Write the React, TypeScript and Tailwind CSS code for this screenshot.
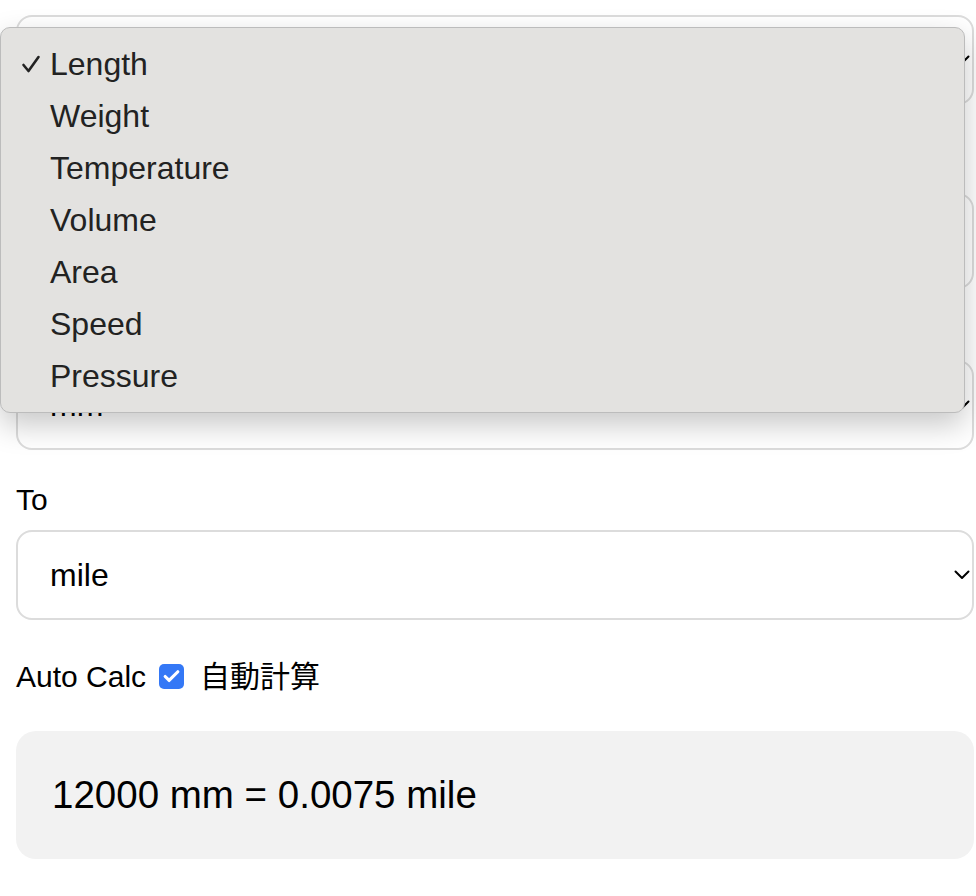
import { Check } from 'lucide-react'

const categories = ['Length', 'Weight', 'Temperature', 'Volume', 'Area', 'Speed', 'Pressure']

function Chevron() {
  return (
    <svg width="16" height="10" viewBox="0 0 16 10" fill="none" className="shrink-0">
      <path d="M1.5 1.5 L8 8 L14.5 1.5" stroke="#000" strokeWidth="2" strokeLinecap="round" strokeLinejoin="round" />
    </svg>
  )
}

function SelectBox({ value, className = '' }: { value: string; className?: string }) {
  return (
    <div
      className={`flex items-center justify-between w-[958px] rounded-[16px] border-2 border-[#dcdcdc] bg-white pl-[32px] pr-[2px] ${className}`}
    >
      <span className="text-[32px] leading-none text-black">{value}</span>
      <Chevron />
    </div>
  )
}

export default function App() {
  return (
    <div
      className="relative w-[976px] h-[896px] overflow-hidden bg-white text-black"
      style={{ fontFamily: '"Liberation Sans", "Noto Sans CJK JP", sans-serif' }}
    >
      <div className="flex flex-col pl-4 pt-[15px]">
        <SelectBox value="Length" className="h-[90px]" />

        <label className="mt-[42px] mb-[10px] text-[30px] leading-[36px]">Value</label>
        <div className="w-[958px] h-[96px] rounded-[16px] border-2 border-[#dcdcdc] bg-white pl-[32px] flex items-center text-[32px]">
          12000
        </div>

        <label className="mt-[20px] mb-[15px] text-[30px] leading-[36px]">From</label>
        <SelectBox value="mm" className="h-[90px]" />

        <label className="mt-[32px] mb-[12px] text-[30px] leading-[36px]">To</label>
        <SelectBox value="mile" className="h-[90px]" />

        <div className="mt-[40px] flex items-center h-[32px] text-[30px]">
          <span>Auto Calc</span>
          <span className="ml-[13px] w-[25px] h-[25px] rounded-[5px] bg-[#3478f6] flex items-center justify-center">
            <Check className="w-[19px] h-[19px] text-white" strokeWidth={4} />
          </span>
          <span className="ml-[16px]">自動計算</span>
        </div>

        <div className="mt-[39px] w-[958px] h-[128px] rounded-[20px] bg-[#f2f2f2] flex items-center pl-[36px]">
          <span className="text-[38.5px]">12000 mm = 0.0075 mile</span>
        </div>
      </div>

      {/* open native select popup */}
      <div className="absolute left-0 top-[27px] w-[965px] rounded-[10px] border border-[#bcbcbc] bg-[#e3e2e0] py-[10px] shadow-[0_12px_30px_rgba(0,0,0,0.22)]">
        {categories.map((c, i) => (
          <div key={c} className="flex items-center h-[52px] text-[32px] text-[#222]">
            <span className="w-[49px] flex justify-start pl-[20px]">
              {i === 0 && (
                <svg width="20" height="20" viewBox="0 0 20 20" fill="none">
                  <path d="M2.5 11 L7.5 17 L17.5 3" stroke="#222" strokeWidth="2.6" strokeLinecap="round" strokeLinejoin="round" />
                </svg>
              )}
            </span>
            <span>{c}</span>
          </div>
        ))}
      </div>
    </div>
  )
}
